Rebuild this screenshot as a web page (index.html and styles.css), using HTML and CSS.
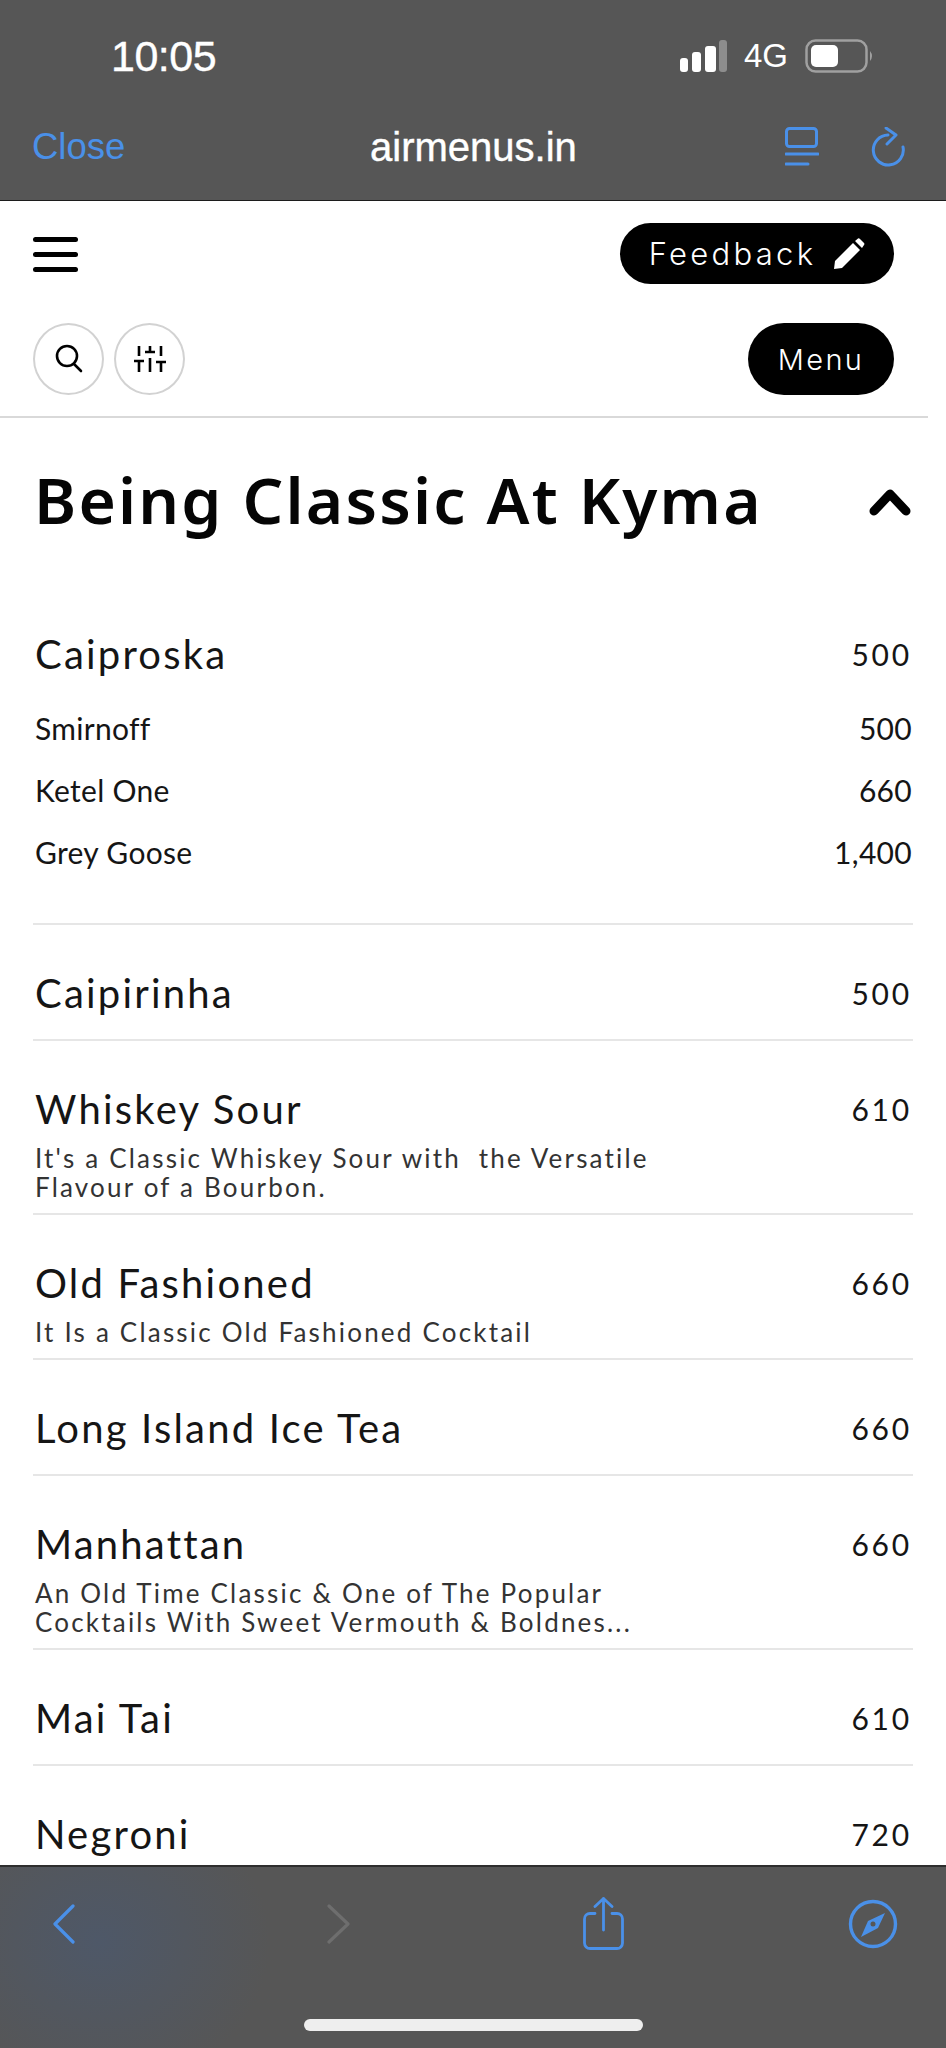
FILE: index.html
```html
<!DOCTYPE html>
<html lang="en">
<head>
<meta charset="utf-8">
<title>airmenus.in</title>
<link rel="stylesheet" href="styles.css">
</head>
<body>
<div class="phone">
  <header class="chrome-top">
    <div class="status">
      <span class="time">10:05</span>
      <div class="status-right">
        <svg width="48" height="32" viewBox="0 0 48 32"><rect x="0" y="18" width="8" height="14" rx="3" fill="#fff"/><rect x="12" y="12" width="9" height="20" rx="3" fill="#fff"/><rect x="25" y="6" width="11" height="26" rx="3" fill="#fff"/><rect x="39" y="0" width="8" height="32" rx="3" fill="#8d8d8d"/></svg>
        <span class="net">4G</span>
        <svg width="70" height="34" viewBox="0 0 70 34"><rect x="1.500" y="1.500" width="60" height="31" rx="9" fill="none" stroke="#a0a0a0" stroke-width="2.500"/><rect x="6" y="6" width="27" height="22" rx="5" fill="#fff"/><path d="M65 12q4 5 0 10z" fill="#a0a0a0"/></svg>
      </div>
    </div>
    <div class="navline">
      <span class="close">Close</span>
      <span class="host">airmenus.in</span>
      <div class="nav-icons">
        <svg width="34" height="40" viewBox="0 0 34 40" fill="none" stroke="#4a90e8" stroke-width="3" stroke-linecap="round"><rect x="1.500" y="1.500" width="30" height="18" rx="3"/><path d="M1 27h32M1 37h22"/></svg>
        <svg width="34" height="40" viewBox="0 0 34 40" fill="none" stroke="#4a90e8" stroke-width="3" stroke-linecap="round" stroke-linejoin="round"><path d="M17 8A15 15 0 1 0 32 20"/><path d="M15 1l10 7-9 9"/></svg>
      </div>
    </div>
  </header>

  <main class="page">
    <div class="topbar">
      <div class="burger"><i></i><i></i><i></i></div>
      <div class="pill feedback">Feedback
        <svg width="32" height="32" viewBox="0 0 32 32"><path d="M1 31l1-8L20 5l7 7L9 30z" fill="#fff"/><path d="M22 3l3-2.500q1-.5 2 .5l4 4q1 1 0 2l-2 3z" fill="#fff"/></svg>
      </div>
    </div>
    <div class="toolbar">
      <div class="tools">
        <div class="circle"><svg width="30" height="30" viewBox="0 0 30 30" fill="none" stroke="#000" stroke-width="2.600" stroke-linecap="round"><circle cx="13" cy="12" r="10"/><path d="M20 20l7 7"/></svg></div>
        <div class="circle"><svg width="32" height="26" viewBox="0 0 32 26" fill="none" stroke="#000" stroke-width="2.600"><path d="M5 0v10M5 15v11M0 15h10M16 0v5M16 12v14M11 6h10M27 0v10M27 16v10M22 16h10"/></svg></div>
      </div>
      <div class="pill menu">Menu</div>
    </div>

    <div class="section">
      <h1>Being Classic At Kyma</h1>
      <svg class="chev" width="42" height="28" viewBox="0 0 42 28" fill="none" stroke="#000" stroke-width="9" stroke-linecap="round" stroke-linejoin="round"><path d="M5 23L21 6l16 17"/></svg>
    </div>

    <div class="list">
      <div class="group">
        <div class="row-head"><span class="name">Caiproska</span><span class="price">500</span></div>
        <div class="sub"><span>Smirnoff</span><span>500</span></div>
        <div class="sub"><span>Ketel One</span><span>660</span></div>
        <div class="sub"><span>Grey Goose</span><span>1,400</span></div>
      </div>
      <div class="item plain"><div class="row-head"><span class="name">Caipirinha</span><span class="price">500</span></div></div>
      <div class="item two"><div class="row-head"><span class="name">Whiskey Sour</span><span class="price">610</span></div><p class="desc">It's a Classic Whiskey Sour with&nbsp; the Versatile<br>Flavour of a Bourbon.</p></div>
      <div class="item one"><div class="row-head"><span class="name">Old Fashioned</span><span class="price">660</span></div><p class="desc">It Is a Classic Old Fashioned Cocktail</p></div>
      <div class="item plain"><div class="row-head"><span class="name">Long Island Ice Tea</span><span class="price">660</span></div></div>
      <div class="item two"><div class="row-head"><span class="name">Manhattan</span><span class="price">660</span></div><p class="desc">An Old Time Classic &amp; One of The Popular<br>Cocktails With Sweet Vermouth &amp; Boldnes...</p></div>
      <div class="item plain"><div class="row-head"><span class="name">Mai Tai</span><span class="price">610</span></div></div>
      <div class="item plain"><div class="row-head"><span class="name">Negroni</span><span class="price">720</span></div></div>
    </div>
  </main>

  <footer class="chrome-bottom">
    <div class="tabs">
      <svg width="22" height="40" viewBox="0 0 22 40" fill="none" stroke="#4a90e8" stroke-width="3.200" stroke-linecap="round" stroke-linejoin="round"><path d="M20 2L2 20l18 18"/></svg>
      <svg width="23" height="40" viewBox="0 0 23 40" fill="none" stroke="#6e6e6e" stroke-width="3.200" stroke-linecap="round" stroke-linejoin="round"><path d="M2 2l19 18L2 38"/></svg>
      <svg width="41" height="53" viewBox="0 0 41 53" fill="none" stroke="#4a90e8" stroke-width="2.800" stroke-linecap="round" stroke-linejoin="round"><path d="M12 16.500H7a5.500 5.500 0 0 0-5.500 5.500v24a5.500 5.500 0 0 0 5.500 5.500h27a5.500 5.500 0 0 0 5.500-5.500V22a5.500 5.500 0 0 0-5.500-5.500h-5"/><path d="M20.500 33V1.500M12 9.500l8.500-8 8.500 8"/></svg>
      <svg width="50" height="50" viewBox="0 0 50 50"><circle cx="25" cy="25" r="22.500" fill="none" stroke="#4a90e8" stroke-width="3.400"/><path d="M37 14l-7 15-17 9 7-16z" fill="#4a90e8"/><circle cx="25" cy="25" r="2.500" fill="#565656"/></svg>
    </div>
    <div class="home-bar"></div>
  </footer>
</div>
</body>
</html>
```
FILE: styles.css
```css
* { box-sizing: border-box; }
html, body { margin: 0; padding: 0; background: #fff; }
.phone {
  width: 946px;
  height: 2048px;
  display: flex;
  flex-direction: column;
  overflow: hidden;
  font-family: Lato, "Noto Sans", sans-serif;
  color: #151515;
}
.chrome-top {
  height: 201px;
  flex: none;
  background: #565656;
  border-bottom: 1px solid #1c1c1c;
  font-family: "Liberation Sans", sans-serif;
  color: #fff;
}
.status {
  height: 115px;
  padding: 36px 71px 0 111px;
  display: flex;
  justify-content: space-between;
  align-items: flex-start;
}
.time { font-size: 43px; line-height: 40px; letter-spacing: -0.5px; -webkit-text-stroke: .4px #fff; }
.status-right { display: flex; align-items: center; margin-top: 3px; }
.status-right svg { display: block; }
.net { font-size: 33px; line-height: 32px; margin-left: 16px; margin-right: 17px; }
.navline {
  display: flex;
  align-items: center;
  position: relative;
  height: 64px;
  padding: 0 41px 0 32px;
  justify-content: space-between;
}
.close { font-size: 36.500px; color: #4a90e8; }
.host { font-size: 40px; position: absolute; left: 370px; -webkit-text-stroke: .4px #fff; }
.nav-icons { display: flex; gap: 52px; }
.nav-icons svg { display: block; }

.page { flex: 1; min-height: 0; overflow: hidden; }
.topbar {
  height: 102px;
  padding: 22px 52px 0 33px;
  display: flex;
  justify-content: space-between;
  align-items: flex-start;
}
.burger { width: 45px; margin-top: 14px; display: flex; flex-direction: column; gap: 10px; }
.burger i { display: block; height: 5px; border-radius: 3px; background: #000; }
.pill { background: #000; color: #fff; display: flex; align-items: center; justify-content: center; border-radius: 40px; font-family: Inter, sans-serif; font-weight: 300; }
.feedback { width: 274px; height: 61px; font-size: 31px; letter-spacing: 3.300px; gap: 17px; }
.toolbar {
  height: 115px;
  width: 928px;
  padding: 20px 34px 0 33px;
  border-bottom: 2px solid #d9d9d9;
  display: flex;
  justify-content: space-between;
  align-items: flex-start;
}
.tools { display: flex; gap: 10px; }
.circle { width: 71px; height: 72px; border: 2px solid #d2d2d2; border-radius: 50%; display: flex; align-items: center; justify-content: center; }
.menu { width: 146px; height: 72px; font-size: 29px; letter-spacing: 2.300px; }
.section {
  height: 171px;
  padding: 0 35px 0 34px;
  display: flex;
  justify-content: space-between;
  align-items: center;
}
h1 { margin: 0 0 8px; font-family: "Noto Sans", sans-serif; font-size: 64px; font-weight: 600; letter-spacing: 2.200px; color: #050505; line-height: 1; }
.chev { margin-bottom: 4px; }
.list { padding: 0 33px; }
.row-head { display: flex; justify-content: space-between; align-items: center; height: 48px; }
.name { font-size: 40px; line-height: 48px; letter-spacing: 2.200px; }
.price { font-size: 30px; line-height: 48px; letter-spacing: 2.800px; }
.group { height: 336px; border-bottom: 2px solid #e6e6e6; padding: 41px 1px 0 2px; }
.group .row-head { margin-bottom: 19px; }
.sub { display: flex; justify-content: space-between; align-items: center; height: 62px; font-size: 30px; letter-spacing: .3px; }
.item { border-bottom: 2px solid #e6e6e6; padding: 44px 1px 0 2px; }
.plain { height: 116px; }
.two { height: 174px; }
.one { height: 145px; }
.desc { margin: 0; padding-top: 11px; font-size: 26px; line-height: 29px; letter-spacing: 2.200px; color: #333; }
.chrome-bottom {
  height: 183px;
  flex: none;
  background: radial-gradient(ellipse 170px 150px at 100px 75px, #4e5868, rgba(86, 86, 86, 0)), #565656;
  border-top: 2px solid #2e2e2e;
  position: relative;
}
.tabs {
  padding: 30px 0 0 53px;
  display: grid;
  grid-template-columns: 274px 256px 265px auto;
  align-items: center;
}
.home-bar {
  position: absolute;
  left: 304px;
  top: 152px;
  width: 339px;
  height: 12px;
  border-radius: 6px;
  background: #eee;
}
```
